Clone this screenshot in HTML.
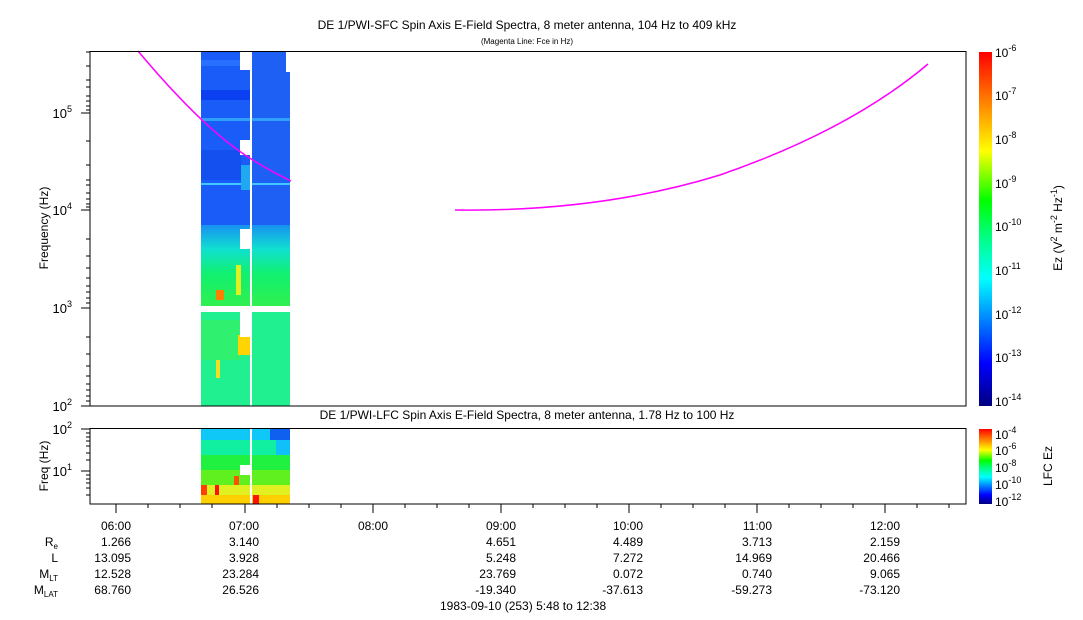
<!DOCTYPE html>
<html><head><meta charset="utf-8"><style>
html,body{margin:0;padding:0;background:#fff;width:1083px;height:620px;overflow:hidden}
svg text{font-family:"Liberation Sans",sans-serif;fill:#000}
</style></head><body>
<svg width="1083" height="620" viewBox="0 0 1083 620" xmlns="http://www.w3.org/2000/svg">
<defs>
<linearGradient id="jet" x1="0" y1="1" x2="0" y2="0">
<stop offset="0" stop-color="#00007f"/><stop offset="0.12" stop-color="#0000ff"/>
<stop offset="0.36" stop-color="#00ffff"/><stop offset="0.48" stop-color="#00ff80"/><stop offset="0.58" stop-color="#00ff00"/>
<stop offset="0.72" stop-color="#ffff00"/><stop offset="0.86" stop-color="#ff8000"/><stop offset="1" stop-color="#ff0000"/>
</linearGradient>
<linearGradient id="mid" x1="0" y1="0" x2="0" y2="1">
<stop offset="0" stop-color="#1890f0"/><stop offset="0.3" stop-color="#10e0d0"/><stop offset="0.6" stop-color="#10f070"/><stop offset="1" stop-color="#30f050"/>
</linearGradient>
</defs>
<text x="527" y="29" font-size="12" text-anchor="middle">DE 1/PWI-SFC  Spin Axis E-Field Spectra, 8 meter antenna, 104 Hz to 409 kHz</text>
<text x="527" y="44" font-size="8" text-anchor="middle">(Magenta Line: Fce in Hz)</text>

<!-- upper data -->
<g>
<rect x="201" y="52" width="49" height="173" fill="#1a5cf8"/>
<rect x="252" y="52" width="38" height="173" fill="#1e60f4"/>
<rect x="201" y="60" width="49" height="6" fill="#2870ff"/>
<rect x="201" y="90" width="49" height="10" fill="#0a40f0"/>
<rect x="201" y="118" width="89" height="3" fill="#30a0ff"/>
<rect x="201" y="183" width="89" height="2" fill="#40c8ff"/>
<rect x="201" y="150" width="40" height="30" fill="#1450f0"/>
<rect x="241" y="165" width="9" height="25" fill="#20a8f0"/>
<rect x="201" y="225" width="89" height="81" fill="url(#mid)"/>
<rect x="201" y="312" width="89" height="94" fill="#20f090"/>
<rect x="201" y="320" width="39" height="40" fill="#30f070"/>
<rect x="238" y="335" width="12" height="20" fill="#ffd400"/>
<rect x="216" y="290" width="8" height="10" fill="#ff8000"/>
<rect x="236" y="265" width="5" height="30" fill="#e0f020"/>
<rect x="216" y="360" width="4" height="18" fill="#f0e020"/>
<rect x="250" y="52" width="2" height="354" fill="#fff"/>
<rect x="240" y="52" width="10" height="18" fill="#fff"/>
<rect x="240" y="140" width="10" height="15" fill="#fff"/>
<rect x="240" y="229" width="10" height="20" fill="#fff"/>
<rect x="201" y="306" width="89" height="6" fill="#fff"/>
<rect x="240" y="312" width="10" height="25" fill="#fff"/>
<rect x="286" y="52" width="4" height="20" fill="#fff"/>
</g>
<path d="M138,51 Q200,125 245,155 Q268,170 291,181" fill="none" stroke="#ff00ff" stroke-width="1.5"/>
<path d="M455,210 Q600,212 720,175 Q850,130 928,64" fill="none" stroke="#ff00ff" stroke-width="1.5"/>
<rect x="90" y="51.5" width="876" height="354.5" fill="none" stroke="#000" stroke-width="1"/>
<g stroke="#000">
<line x1="81" y1="113" x2="90" y2="113"/><line x1="81" y1="210" x2="90" y2="210"/><line x1="81" y1="308" x2="90" y2="308"/><line x1="81" y1="406" x2="90" y2="406"/>
<path d="M86,52h4M86,66h4M86,80h4M86,87h4M86,96h4M86,101h4M86,106h4M86,110h4M86,141h4M86,180h4M86,165h4M86,185h4M86,193h4M86,199h4M86,204h4M86,207h4M86,239h4M86,256h4M86,268h4M86,278h4M86,286h4M86,292h4M86,298h4M86,303h4M86,337h4M86,354h4M86,366h4M86,376h4M86,384h4M86,390h4M86,396h4M86,401h4"/>
</g>
<g font-size="13" text-anchor="end">
<text x="72" y="118">10<tspan font-size="9" dy="-6">5</tspan></text>
<text x="72" y="215">10<tspan font-size="9" dy="-6">4</tspan></text>
<text x="72" y="313">10<tspan font-size="9" dy="-6">3</tspan></text>
<text x="72" y="411">10<tspan font-size="9" dy="-6">2</tspan></text>
</g>
<text transform="translate(48,228) rotate(-90)" font-size="12" text-anchor="middle">Frequency (Hz)</text>

<!-- upper colorbar -->
<rect x="979" y="52" width="13" height="354" fill="url(#jet)"/>
<g font-size="12">
<text x="995" y="57">10<tspan font-size="9" dy="-6">-6</tspan></text>
<text x="995" y="100">10<tspan font-size="9" dy="-6">-7</tspan></text>
<text x="995" y="144">10<tspan font-size="9" dy="-6">-8</tspan></text>
<text x="995" y="188">10<tspan font-size="9" dy="-6">-9</tspan></text>
<text x="995" y="231">10<tspan font-size="9" dy="-6">-10</tspan></text>
<text x="995" y="275">10<tspan font-size="9" dy="-6">-11</tspan></text>
<text x="995" y="319">10<tspan font-size="9" dy="-6">-12</tspan></text>
<text x="995" y="362">10<tspan font-size="9" dy="-6">-13</tspan></text>
<text x="995" y="406">10<tspan font-size="9" dy="-6">-14</tspan></text>
</g>
<text transform="translate(1062,228) rotate(-90)" font-size="12" text-anchor="middle">Ez (V<tspan font-size="9" dy="-5">2</tspan><tspan dy="5"> m</tspan><tspan font-size="9" dy="-5">-2</tspan><tspan dy="5"> Hz</tspan><tspan font-size="9" dy="-5">-1</tspan><tspan dy="5">)</tspan></text>

<!-- lower -->
<text x="527" y="419" font-size="12" text-anchor="middle">DE 1/PWI-LFC  Spin Axis E-Field Spectra, 8 meter antenna, 1.78 Hz to 100 Hz</text>
<g>
<rect x="201" y="429" width="89" height="11" fill="#10c8f8"/>
<rect x="270" y="429" width="20" height="11" fill="#1060f0"/>
<rect x="201" y="440" width="89" height="15" fill="#10f0a0"/>
<rect x="276" y="440" width="14" height="15" fill="#10c0f8"/>
<rect x="201" y="455" width="89" height="15" fill="#20f040"/>
<rect x="201" y="470" width="89" height="15" fill="#60f020"/>
<rect x="201" y="485" width="89" height="10" fill="#e0f020"/>
<rect x="201" y="495" width="89" height="9" fill="#ffd000"/>
<rect x="201" y="485" width="6" height="10" fill="#ff4000"/>
<rect x="215" y="485" width="4" height="10" fill="#ff1000"/>
<rect x="234" y="476" width="5" height="9" fill="#ff5000"/>
<rect x="253" y="495" width="6" height="9" fill="#ff1000"/>
<rect x="240" y="465" width="10" height="10" fill="#fff"/>
<rect x="250" y="429" width="2" height="75" fill="#fff"/>
</g>
<rect x="90" y="428.5" width="876" height="75.5" fill="none" stroke="#000"/>
<g stroke="#000">
<line x1="81" y1="429" x2="90" y2="429"/><line x1="81" y1="471" x2="90" y2="471"/>
<path d="M86,433h4M86,437h4M86,441h4M86,446h4M86,453h4M86,460h4M86,475h4M86,479h4M86,483h4M86,488h4M86,495h4"/>
<path d="M116,504v9M245,504v9M373,504v9M501,504v9M629,504v9M757,504v9M885,504v9"/>
<path d="M148,504v4M180,504v4M212,504v4M277,504v4M309,504v4M341,504v4M405,504v4M437,504v4M469,504v4M533,504v4M565,504v4M597,504v4M661,504v4M693,504v4M725,504v4M789,504v4M821,504v4M853,504v4M917,504v4M949,504v4"/>
</g>
<g font-size="13" text-anchor="end">
<text x="72" y="434">10<tspan font-size="9" dy="-6">2</tspan></text>
<text x="72" y="476">10<tspan font-size="9" dy="-6">1</tspan></text>
</g>
<text transform="translate(48,466) rotate(-90)" font-size="12" text-anchor="middle">Freq (Hz)</text>
<rect x="979" y="429" width="13" height="75" fill="url(#jet)"/>
<g font-size="12">
<text x="995" y="439">10<tspan font-size="9" dy="-6">-4</tspan></text>
<text x="995" y="455">10<tspan font-size="9" dy="-6">-6</tspan></text>
<text x="995" y="472">10<tspan font-size="9" dy="-6">-8</tspan></text>
<text x="995" y="489">10<tspan font-size="9" dy="-6">-10</tspan></text>
<text x="995" y="506">10<tspan font-size="9" dy="-6">-12</tspan></text>
</g>
<text transform="translate(1052,466) rotate(-90)" font-size="12" text-anchor="middle">LFC Ez</text>

<!-- bottom labels -->
<g font-size="12" text-anchor="end">
<text x="58" y="546">R<tspan font-size="8" dy="3">e</tspan></text>
<text x="58" y="562">L</text>
<text x="58" y="578">M<tspan font-size="8" dy="3">LT</tspan></text>
<text x="58" y="594">M<tspan font-size="8" dy="3">LAT</tspan></text>
<text x="131" y="530">06:00</text><text x="131" y="546">1.266</text><text x="131" y="562">13.095</text><text x="131" y="578">12.528</text><text x="131" y="594">68.760</text>
<text x="259" y="530">07:00</text><text x="259" y="546">3.140</text><text x="259" y="562">3.928</text><text x="259" y="578">23.284</text><text x="259" y="594">26.526</text>
<text x="388" y="530">08:00</text>
<text x="516" y="530">09:00</text><text x="516" y="546">4.651</text><text x="516" y="562">5.248</text><text x="516" y="578">23.769</text><text x="516" y="594">-19.340</text>
<text x="643" y="530">10:00</text><text x="643" y="546">4.489</text><text x="643" y="562">7.272</text><text x="643" y="578">0.072</text><text x="643" y="594">-37.613</text>
<text x="772" y="530">11:00</text><text x="772" y="546">3.713</text><text x="772" y="562">14.969</text><text x="772" y="578">0.740</text><text x="772" y="594">-59.273</text>
<text x="900" y="530">12:00</text><text x="900" y="546">2.159</text><text x="900" y="562">20.466</text><text x="900" y="578">9.065</text><text x="900" y="594">-73.120</text>
</g>
<text x="440" y="610" font-size="12">1983-09-10 (253) 5:48 to 12:38</text>
</svg>
</body></html>
